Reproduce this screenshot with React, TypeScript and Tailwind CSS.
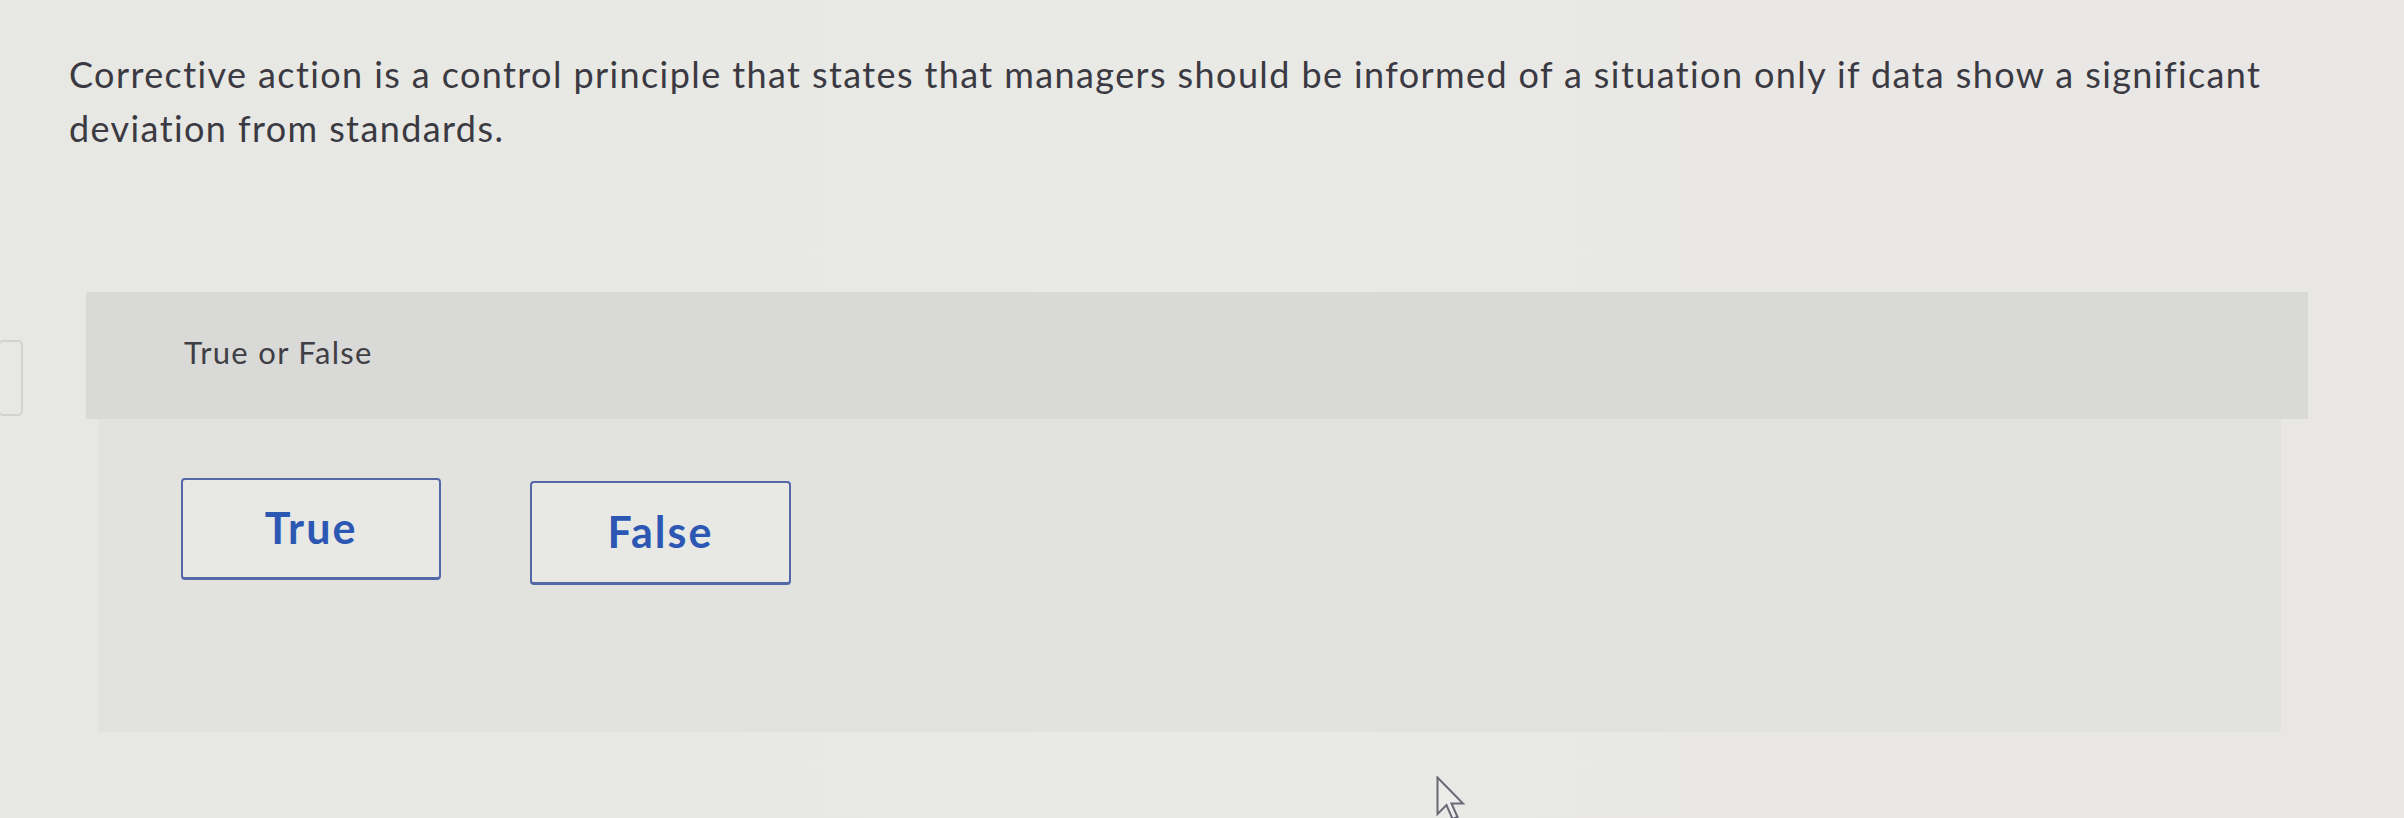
import React from "react";

function Cursor() {
  return (
    <svg
      className="absolute left-[1436px] top-[776px]"
      width="30"
      height="48"
      viewBox="0 0 30 48"
      fill="none"
    >
      <path
        d="M1.5 1.5 L1.5 38 L10.5 29 L16.5 43 L21.5 41 L15.5 27.5 L27 27.5 Z"
        fill="#ececea"
        stroke="#6b6875"
        strokeWidth="2"
        strokeLinejoin="miter"
      />
    </svg>
  );
}

export default function App() {
  return (
    <div
      className="relative w-full h-[818px] overflow-hidden bg-gradient-to-r from-[#e7e8e3] via-[#e9e9e6] to-[#e9e7e5]"
      style={{ fontFamily: "Lato, 'Open Sans', 'Liberation Sans', sans-serif" }}
    >
      <div className="pt-[47px] pl-[69px]">
        <p className="text-[36px] leading-[54px] text-[#3b3a42] tracking-[1.4px] max-w-[2250px]">
          Corrective action is a control principle that states that managers should be informed of a situation only if data show a significant deviation from standards.
        </p>
      </div>

      <div className="mt-[137px] flex items-start">
        <div className="-ml-[2px] mt-[48px] w-[25px] h-[76px] shrink-0 rounded-[5px] border-2 border-[#d2d2ce]" />
        <div className="ml-[63px] w-[2222px] shrink-0">
          <div className="bg-[#d9d9d7] h-[127px] pt-[42px] pl-[98px]">
            <div className="text-[31px] leading-[36px] tracking-[1.3px] text-[#3f3f45]">True or False</div>
          </div>
          <div className="ml-[12px] mr-[27px] bg-[#e2e2df] h-[313px] pt-[59px] pl-[83px]">
            <div className="flex items-start gap-[89px]">
              <button className="w-[260px] h-[102px] rounded-[4px] border-2 border-b-[3px] border-[#5468a8] bg-[#e8e8e5] flex items-center justify-center text-[43px] tracking-[2px] font-bold text-[#2c58b3]">
                True
              </button>
              <button className="mt-[3px] w-[261px] h-[104px] rounded-[4px] border-2 border-b-[3px] border-[#5468a8] bg-[#e8e8e5] flex items-center justify-center text-[43px] tracking-[2px] font-bold text-[#2c58b3]">
                False
              </button>
            </div>
          </div>
        </div>
      </div>

      <Cursor />
    </div>
  );
}
